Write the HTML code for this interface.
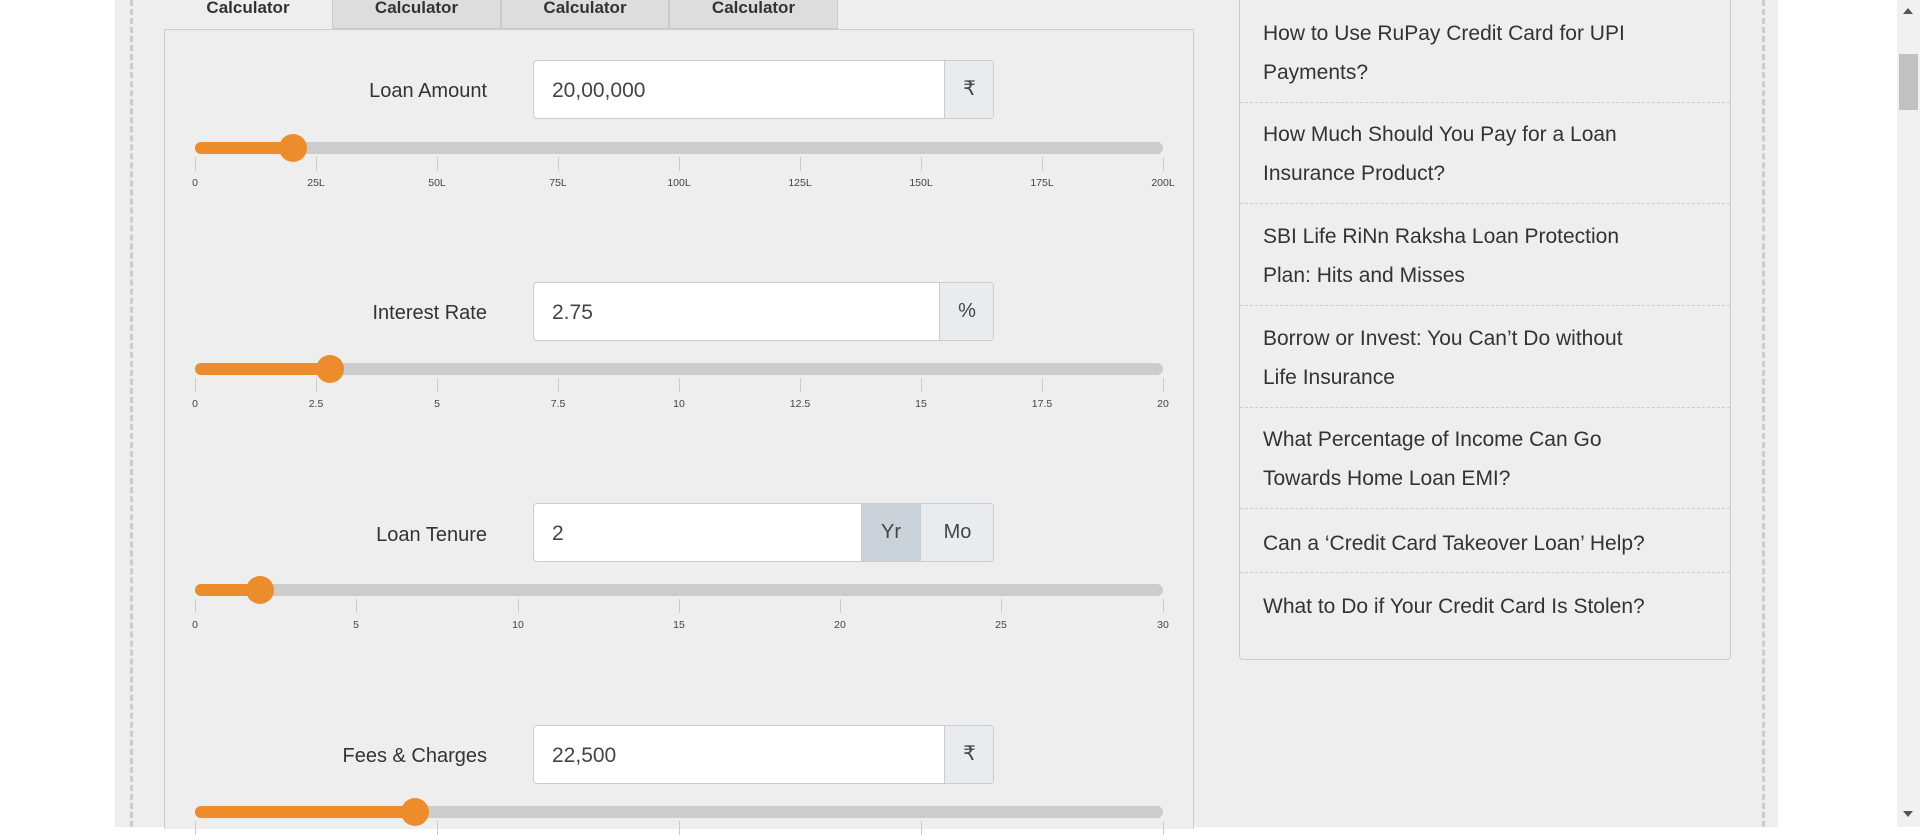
<!DOCTYPE html>
<html><head><meta charset="utf-8"><style>
*{box-sizing:border-box;margin:0;padding:0}
body{width:1920px;height:827px;overflow:hidden;background:#fff;font-family:"Liberation Sans",sans-serif;color:#333;position:relative}
.abs{position:absolute}
.wrap{left:115px;top:0;width:1663px;height:827px;background:#eee}
.dash{top:0;height:827px;width:0;border-left:3px dashed #ccc}
.panel{left:164px;top:29px;width:1030px;height:800px;border:1px solid #ccc;border-bottom:none;background:#eee}
.tab{top:-1px;height:30px;font-size:17px;font-weight:bold;color:#333;text-align:center;line-height:18px;background:#ddd;border:1px solid #ccc;border-top:none}
.lbl{width:240px;left:247px;text-align:right;font-size:20px;color:#333}
.inp{left:533px;width:461px;height:59px;background:#fff;border:1px solid #ccc;border-radius:4px;overflow:hidden}
.inp .v{position:absolute;left:18px;top:1px;line-height:57px;font-size:21px;color:#444}
.add{position:absolute;top:0;height:57px;line-height:57px;text-align:center;font-size:20px;background:#e9ecef;border-left:1px solid #ccc;color:#444}
.track{left:195px;width:968px;height:12px;background:#ccc;border-radius:6px}
.fill{position:absolute;left:0;top:0;height:12px;background:#ed8c2b;border-radius:6px}
.thumb{position:absolute;top:-8px;width:28px;height:28px;border-radius:50%;background:#ed8c2b;margin-left:-14px}
.tick{width:1px;height:14px;background:#ccc}
.tl{font-size:10.5px;color:#444;width:40px;margin-left:-20px;text-align:center}
.side{left:1239px;top:-2px;width:492px;height:662px;border:1px solid #ccc;border-radius:0 0 4px 4px}
.item{position:absolute;left:23px;font-size:21px;line-height:39px;color:#333}
.sep{position:absolute;left:0;width:490px;border-top:1px dashed #ccc}
</style></head><body>
<div class="abs wrap"></div>
<div class="abs dash" style="left:130px"></div>
<div class="abs dash" style="left:1762px"></div>
<div class="abs panel"></div>
<div class="abs tab" style="left:164px;width:168px;background:#eee;border:none">Calculator</div>
<div class="abs tab" style="left:332px;width:169px">Calculator</div>
<div class="abs tab" style="left:501px;width:168px">Calculator</div>
<div class="abs tab" style="left:669px;width:169px">Calculator</div>

<div class="abs lbl" style="top:80px">Loan Amount</div>
<div class="abs inp" style="top:60px"><span class="v">20,00,000</span><div class="add" style="left:410px;width:50px">₹</div></div>
<div class="abs track" style="top:142px"><div class="fill" style="width:98px"></div><div class="thumb" style="left:98px"></div></div>

<div class="abs lbl" style="top:302px">Interest Rate</div>
<div class="abs inp" style="top:282px"><span class="v">2.75</span><div class="add" style="left:405px;width:55px">%</div></div>
<div class="abs track" style="top:363px"><div class="fill" style="width:135px"></div><div class="thumb" style="left:135px"></div></div>

<div class="abs lbl" style="top:524px">Loan Tenure</div>
<div class="abs inp" style="top:503px"><span class="v">2</span><div class="add" style="left:327px;width:59px;background:#cad2da">Yr</div><div class="add" style="left:386px;width:74px">Mo</div></div>
<div class="abs track" style="top:584px"><div class="fill" style="width:65px"></div><div class="thumb" style="left:65px"></div></div>

<div class="abs lbl" style="top:745px">Fees &amp; Charges</div>
<div class="abs inp" style="top:725px"><span class="v">22,500</span><div class="add" style="left:410px;width:50px">₹</div></div>
<div class="abs track" style="top:806px"><div class="fill" style="width:220px"></div><div class="thumb" style="left:220px"></div></div>

<div class="abs side">
<div class="item" style="top:15px">How to Use RuPay Credit Card for UPI<br>Payments?</div>
<div class="sep" style="top:103px"></div>
<div class="item" style="top:116px">How Much Should You Pay for a Loan<br>Insurance Product?</div>
<div class="sep" style="top:204px"></div>
<div class="item" style="top:218px">SBI Life RiNn Raksha Loan Protection<br>Plan: Hits and Misses</div>
<div class="sep" style="top:306px"></div>
<div class="item" style="top:320px">Borrow or Invest: You Can’t Do without<br>Life Insurance</div>
<div class="sep" style="top:408px"></div>
<div class="item" style="top:421px">What Percentage of Income Can Go<br>Towards Home Loan EMI?</div>
<div class="sep" style="top:509px"></div>
<div class="item" style="top:525px">Can a ‘Credit Card Takeover Loan’ Help?</div>
<div class="sep" style="top:573px"></div>
<div class="item" style="top:588px">What to Do if Your Credit Card Is Stolen?</div>
</div>

<div class="abs" style="left:1897px;top:0;width:23px;height:827px;background:#f1f1f1"></div>
<div class="abs" style="left:1899px;top:54px;width:19px;height:56px;background:#c1c1c1"></div>
<div class="abs" style="left:1903px;top:8px;width:0;height:0;border-left:5px solid transparent;border-right:5px solid transparent;border-bottom:6px solid #555"></div>
<div class="abs" style="left:1903px;top:811px;width:0;height:0;border-left:5px solid transparent;border-right:5px solid transparent;border-top:6px solid #555"></div>

<div class="abs" style="left:0;top:0">
<div class="abs tick" style="left:195px;top:157px"></div><div class="abs tick" style="left:316px;top:157px"></div><div class="abs tick" style="left:437px;top:157px"></div><div class="abs tick" style="left:558px;top:157px"></div><div class="abs tick" style="left:679px;top:157px"></div><div class="abs tick" style="left:800px;top:157px"></div><div class="abs tick" style="left:921px;top:157px"></div><div class="abs tick" style="left:1042px;top:157px"></div><div class="abs tick" style="left:1163px;top:157px"></div>
<div class="abs tl" style="left:195px;top:177px">0</div><div class="abs tl" style="left:316px;top:177px">25L</div><div class="abs tl" style="left:437px;top:177px">50L</div><div class="abs tl" style="left:558px;top:177px">75L</div><div class="abs tl" style="left:679px;top:177px">100L</div><div class="abs tl" style="left:800px;top:177px">125L</div><div class="abs tl" style="left:921px;top:177px">150L</div><div class="abs tl" style="left:1042px;top:177px">175L</div><div class="abs tl" style="left:1163px;top:177px">200L</div>
<div class="abs tick" style="left:195px;top:378px"></div><div class="abs tick" style="left:316px;top:378px"></div><div class="abs tick" style="left:437px;top:378px"></div><div class="abs tick" style="left:558px;top:378px"></div><div class="abs tick" style="left:679px;top:378px"></div><div class="abs tick" style="left:800px;top:378px"></div><div class="abs tick" style="left:921px;top:378px"></div><div class="abs tick" style="left:1042px;top:378px"></div><div class="abs tick" style="left:1163px;top:378px"></div>
<div class="abs tl" style="left:195px;top:398px">0</div><div class="abs tl" style="left:316px;top:398px">2.5</div><div class="abs tl" style="left:437px;top:398px">5</div><div class="abs tl" style="left:558px;top:398px">7.5</div><div class="abs tl" style="left:679px;top:398px">10</div><div class="abs tl" style="left:800px;top:398px">12.5</div><div class="abs tl" style="left:921px;top:398px">15</div><div class="abs tl" style="left:1042px;top:398px">17.5</div><div class="abs tl" style="left:1163px;top:398px">20</div>
<div class="abs tick" style="left:195px;top:599px"></div><div class="abs tick" style="left:356px;top:599px"></div><div class="abs tick" style="left:518px;top:599px"></div><div class="abs tick" style="left:679px;top:599px"></div><div class="abs tick" style="left:840px;top:599px"></div><div class="abs tick" style="left:1001px;top:599px"></div><div class="abs tick" style="left:1163px;top:599px"></div>
<div class="abs tl" style="left:195px;top:619px">0</div><div class="abs tl" style="left:356px;top:619px">5</div><div class="abs tl" style="left:518px;top:619px">10</div><div class="abs tl" style="left:679px;top:619px">15</div><div class="abs tl" style="left:840px;top:619px">20</div><div class="abs tl" style="left:1001px;top:619px">25</div><div class="abs tl" style="left:1163px;top:619px">30</div>
<div class="abs tick" style="left:195px;top:821px"></div><div class="abs tick" style="left:437px;top:821px"></div><div class="abs tick" style="left:679px;top:821px"></div><div class="abs tick" style="left:921px;top:821px"></div><div class="abs tick" style="left:1163px;top:821px"></div>
</div>
</body></html>
